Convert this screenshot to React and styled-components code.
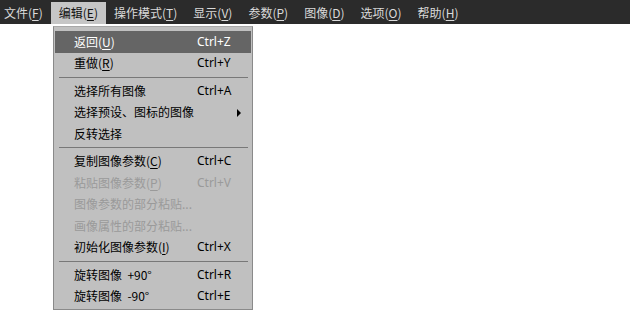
import React from "react";
import styled, { createGlobalStyle } from "styled-components";

const Global = createGlobalStyle`
  html, body { margin: 0; padding: 0; background: #ffffff; }
  body { font-family: "Noto Sans CJK SC", "Noto Sans", sans-serif; font-size: 12px; }
`;

const Page = styled.div`
  position: relative;
  width: 630px;
  height: 310px;
  overflow: hidden;
  background: #ffffff;
`;

const MenuBar = styled.div`
  display: flex;
  align-items: flex-end;
  height: 24px;
  background: #2b2b2b;
`;

const BarItem = styled.div`
  height: 22px;
  display: flex;
  align-items: center;
  padding: 0 8px 0 4px;
  margin-right: 4px;
  color: ${(p) => (p.$open ? "#111" : "#dadada")};
  background: ${(p) => (p.$open ? "#c6c6c6" : "transparent")};
  line-height: 22px;
  white-space: nowrap;
  ${(p) => p.$open && "padding-left: 8px; margin-left: -4px; padding-right: 8px;"}
`;

const U = styled.span`
  text-decoration: underline;
  text-underline-offset: 2px;
`;

const Dropdown = styled.div`
  position: absolute;
  left: 53px;
  top: 26px;
  width: 198px;
  padding: 4px 0 2px;
  background: #c0c0c0;
  border: 1px solid #8a8a8a;
  border-top-color: #a8a8a8;
  box-sizing: content-box;
`;

const Item = styled.div`
  position: relative;
  display: grid;
  grid-template-columns: 123px 1fr;
  align-items: center;
  height: 21.5px;
  padding-left: 19px;
  margin: 0 1px;
  color: ${(p) => (p.$disabled ? "#9a9a9a" : p.$active ? "#ffffff" : "#000000")};
  background: ${(p) => (p.$active ? "#656565" : "transparent")};
  white-space: nowrap;
  line-height: 20px;
`;

const Label = styled.span`
  white-space: pre;
`;

const Shortcut = styled.span`
  font-family: "Noto Sans", "Noto Sans CJK SC", sans-serif;
  font-size: 12px;
`;

const Sep = styled.div`
  height: 1px;
  margin: 2.5px 4px 2.5px 5px;
  background: #787878;
`;

const Arrow = styled.span`
  position: absolute;
  right: 10px;
  top: 7px;
  width: 0;
  height: 0;
  border-top: 4px solid transparent;
  border-bottom: 4px solid transparent;
  border-left: 4px solid #000;
`;

const bar = [
  ["文件", "F"],
  ["编辑", "E"],
  ["操作模式", "T"],
  ["显示", "V"],
  ["参数", "P"],
  ["图像", "D"],
  ["选项", "O"],
  ["帮助", "H"],
];

const items = [
  { label: "返回", key: "U", sc: "Ctrl+Z", active: true },
  { label: "重做", key: "R", sc: "Ctrl+Y" },
  { sep: true },
  { label: "选择所有图像", sc: "Ctrl+A" },
  { label: "选择预设、图标的图像", sub: true },
  { label: "反转选择" },
  { sep: true },
  { label: "复制图像参数", key: "C", sc: "Ctrl+C" },
  { label: "粘贴图像参数", key: "P", sc: "Ctrl+V", disabled: true },
  { label: "图像参数的部分粘贴...", disabled: true },
  { label: "画像属性的部分粘贴...", disabled: true },
  { label: "初始化图像参数", key: "I", sc: "Ctrl+X" },
  { sep: true },
  { label: "旋转图像  +90°", sc: "Ctrl+R" },
  { label: "旋转图像  -90°", sc: "Ctrl+E" },
];

export default function App() {
  return (
    <Page>
      <Global />
      <MenuBar>
        {bar.map(([t, k], i) => (
          <BarItem key={t} $open={i === 1}>
            {t}(<U>{k}</U>)
          </BarItem>
        ))}
      </MenuBar>
      <Dropdown>
        {items.map((it, i) =>
          it.sep ? (
            <Sep key={i} />
          ) : (
            <Item key={i} $active={it.active} $disabled={it.disabled}>
              <Label>
                {it.label}
                {it.key && (
                  <>
                    (<U>{it.key}</U>)
                  </>
                )}
              </Label>
              <Shortcut>{it.sc || ""}</Shortcut>
              {it.sub && <Arrow />}
            </Item>
          )
        )}
      </Dropdown>
    </Page>
  );
}
